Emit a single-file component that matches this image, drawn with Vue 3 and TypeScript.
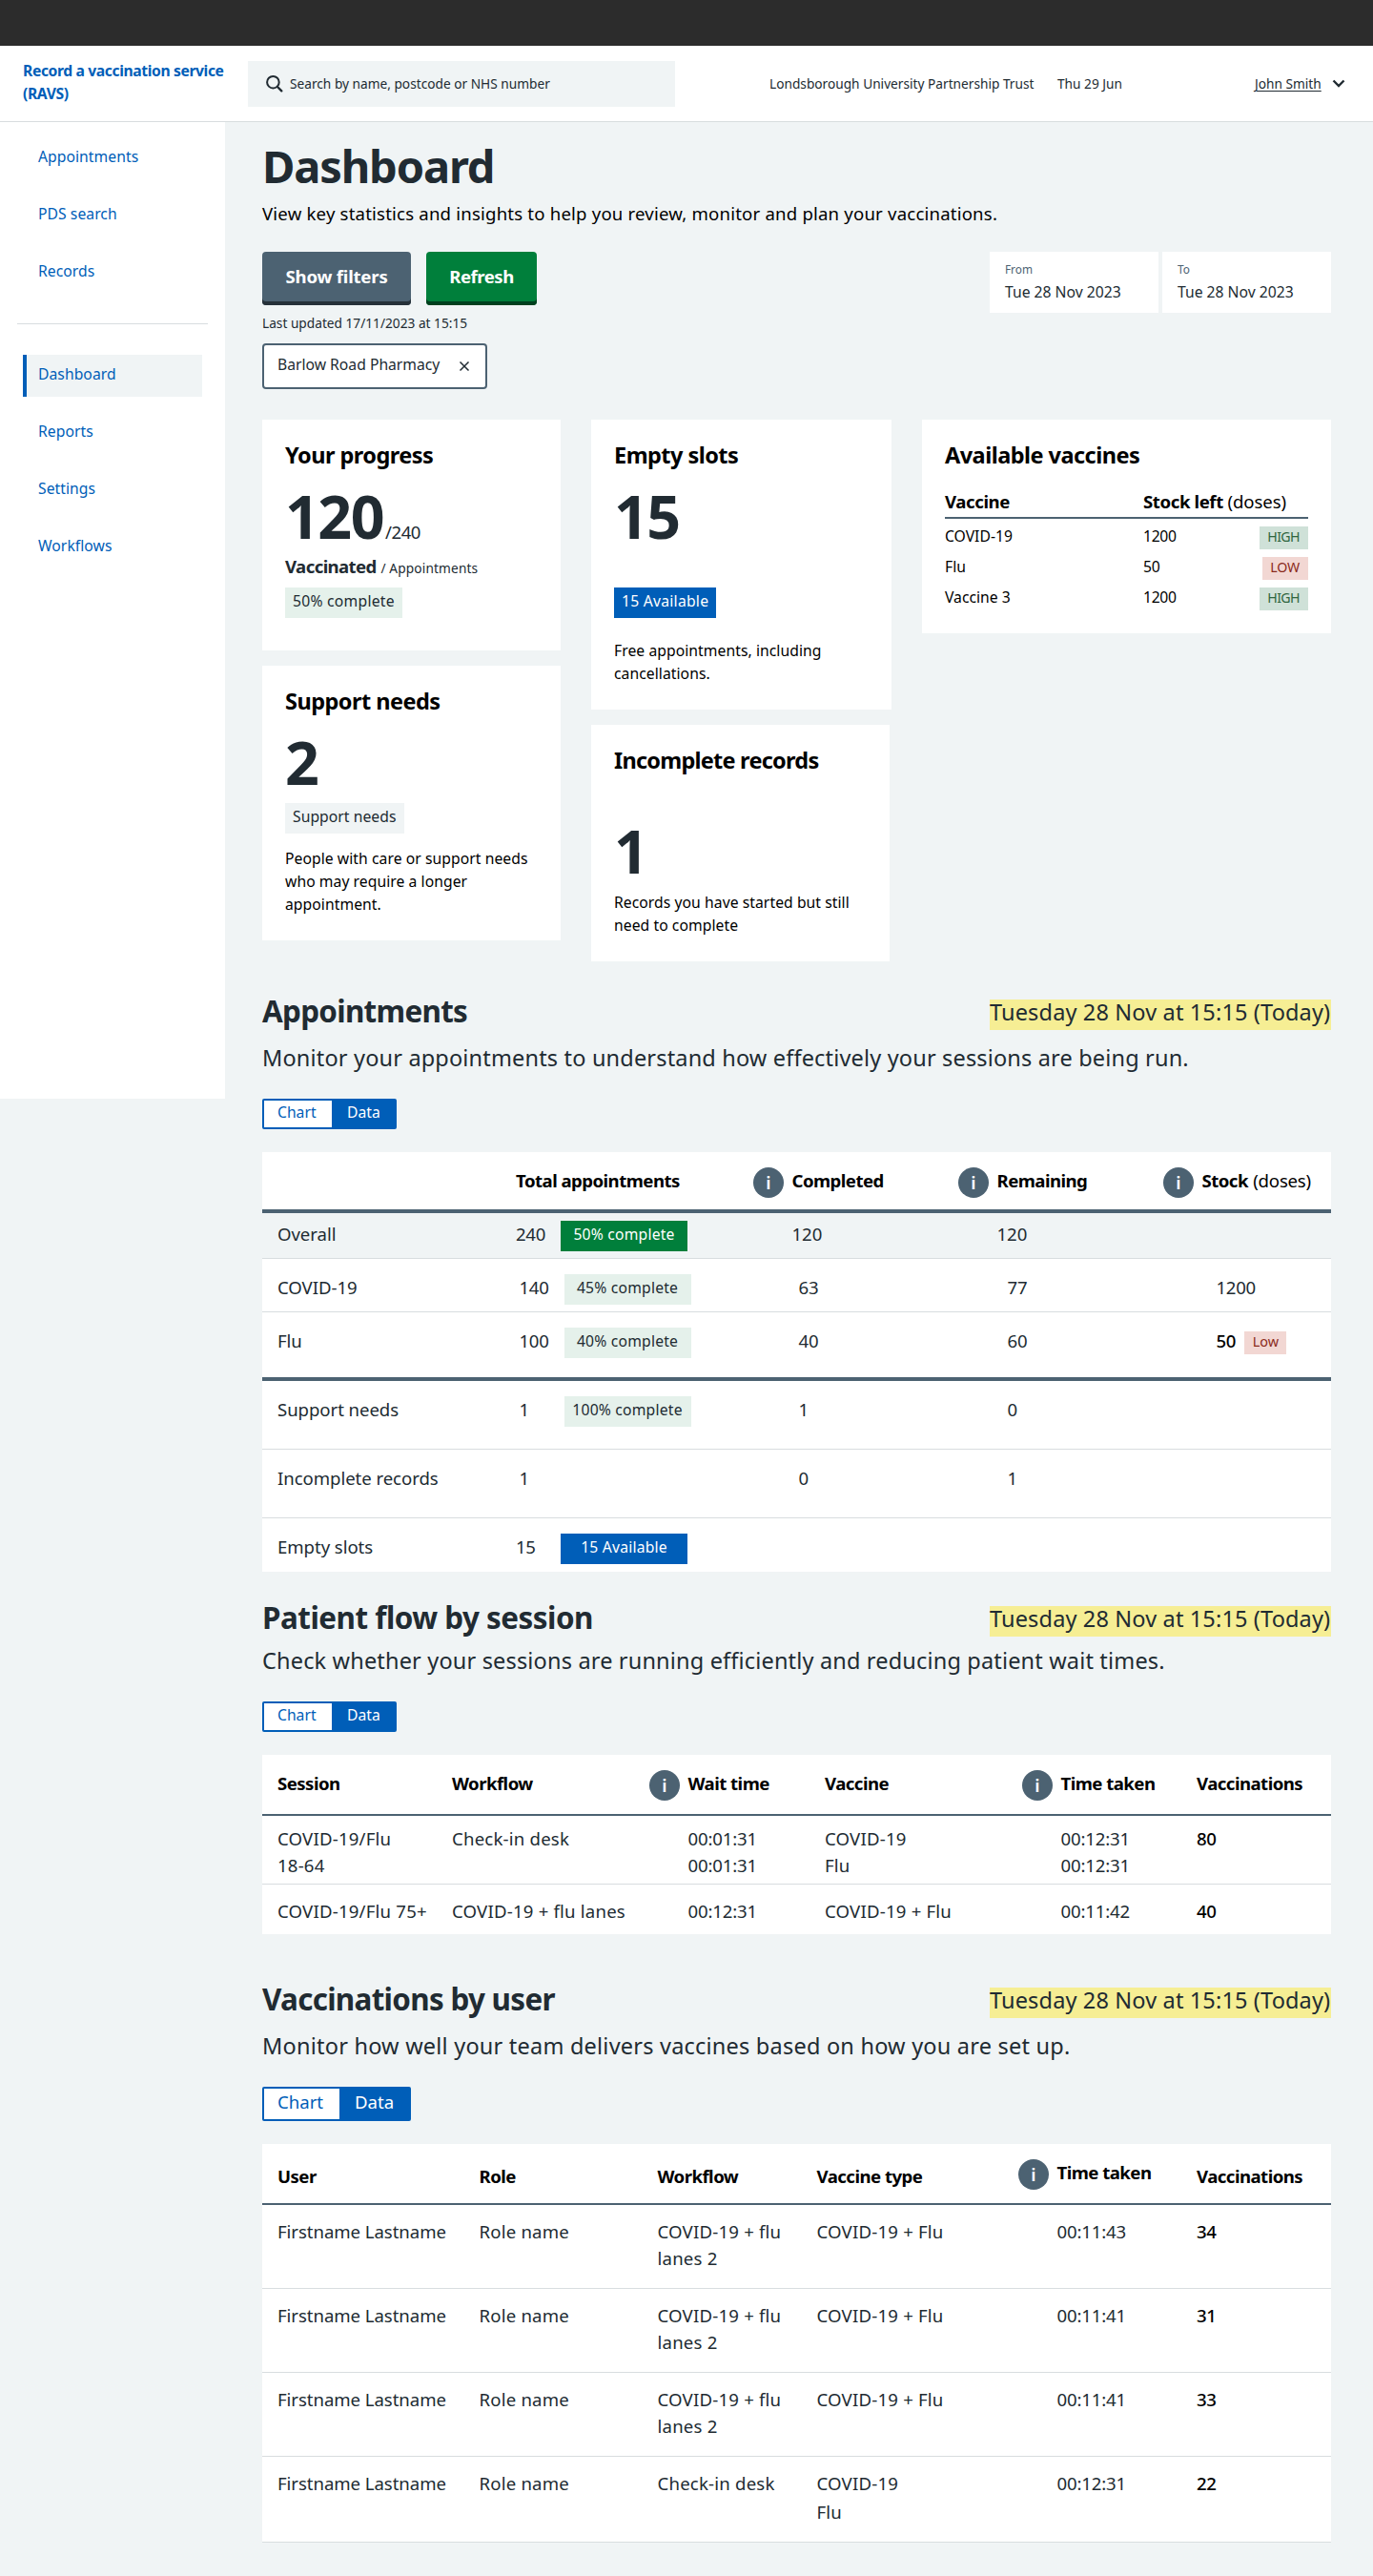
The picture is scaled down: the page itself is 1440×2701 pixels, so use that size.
<script setup lang="ts">
interface NavItem {
  label: string
  active?: boolean
}

interface Badge {
  text: string
  tone: 'green' | 'mint' | 'blue'
}

interface AppointmentRow {
  label: string
  total: string
  badge?: Badge
  completed?: string
  remaining?: string
  stock?: string
  low?: boolean
  kind: string
}

const primaryNav: NavItem[] = [{ label: 'Appointments' }, { label: 'PDS search' }, { label: 'Records' }]
const secondaryNav: NavItem[] = [
  { label: 'Dashboard', active: true },
  { label: 'Reports' },
  { label: 'Settings' },
  { label: 'Workflows' },
]

const vaccines = [
  { name: 'COVID-19', stock: '1200', level: 'HIGH' },
  { name: 'Flu', stock: '50', level: 'LOW' },
  { name: 'Vaccine 3', stock: '1200', level: 'HIGH' },
]

const today = 'Tuesday 28 Nov at 15:15 (Today)'

const appointments: AppointmentRow[] = [
  { label: 'Overall', total: '240', badge: { text: '50% complete', tone: 'green' }, completed: '120', remaining: '120', kind: 'overall' },
  { label: 'COVID-19', total: '140', badge: { text: '45% complete', tone: 'mint' }, completed: '63', remaining: '77', stock: '1200', kind: 'vaccine' },
  { label: 'Flu', total: '100', badge: { text: '40% complete', tone: 'mint' }, completed: '40', remaining: '60', stock: '50', low: true, kind: 'last-vaccine' },
  { label: 'Support needs', total: '1', badge: { text: '100% complete', tone: 'mint' }, completed: '1', remaining: '0', kind: 'other' },
  { label: 'Incomplete records', total: '1', completed: '0', remaining: '1', kind: 'other' },
  { label: 'Empty slots', total: '15', badge: { text: '15 Available', tone: 'blue' }, kind: 'empty' },
]

const sessions = [
  { session: ['COVID-19/Flu', '18-64'], workflow: 'Check-in desk', wait: ['00:01:31', '00:01:31'], vaccine: ['COVID-19', 'Flu'], time: ['00:12:31', '00:12:31'], count: 80 },
  { session: ['COVID-19/Flu 75+'], workflow: 'COVID-19 + flu lanes', wait: ['00:12:31'], vaccine: ['COVID-19 + Flu'], time: ['00:11:42'], count: 40 },
]

const users = [
  { workflow: ['COVID-19 + flu', 'lanes 2'], vaccine: ['COVID-19 + Flu'], time: '00:11:43', count: 34 },
  { workflow: ['COVID-19 + flu', 'lanes 2'], vaccine: ['COVID-19 + Flu'], time: '00:11:41', count: 31 },
  { workflow: ['COVID-19 + flu', 'lanes 2'], vaccine: ['COVID-19 + Flu'], time: '00:11:41', count: 33 },
  { workflow: ['Check-in desk'], vaccine: ['COVID-19', 'Flu'], time: '00:12:31', count: 22 },
]
</script>

<template>
  <div class="page">
    <div class="topbar"></div>

    <header class="header">
      <a class="service">Record a vaccination service<br />(RAVS)</a>
      <div class="search">
        <svg class="search-icon" width="20" height="20" viewBox="0 0 20 20" fill="none" stroke="#212b32">
          <circle cx="8.4" cy="8.2" r="6.3" stroke-width="2" />
          <path d="M13 13l4.300 4.300" stroke-width="2.4" stroke-linecap="round" />
        </svg>
        <span>Search by name, postcode or NHS number</span>
      </div>
      <span class="trust">Londsborough University Partnership Trust</span>
      <span class="date">Thu 29 Jun</span>
      <a class="user">John Smith</a>
      <svg class="chevron" width="14" height="10" viewBox="0 0 14 10" fill="none" stroke="#212b32" stroke-width="2.4">
        <path d="M1.5 1.5L7 7l5.500-5.500" />
      </svg>
    </header>

    <div class="body">
      <nav class="sidebar">
        <a v-for="item in primaryNav" :key="item.label" class="nav-item">{{ item.label }}</a>
        <hr class="divider" />
        <a v-for="item in secondaryNav" :key="item.label" class="nav-item" :class="{ active: item.active }">{{ item.label }}</a>
      </nav>

      <main class="main">
        <h1>Dashboard</h1>
        <p class="intro">View key statistics and insights to help you review, monitor and plan your vaccinations.</p>

        <div class="controls">
          <div>
            <div class="buttons">
              <button class="btn btn-grey">Show filters</button>
              <button class="btn btn-green">Refresh</button>
            </div>
            <p class="updated">Last updated 17/11/2023 at 15:15</p>
            <div class="chip">
              <span>Barlow Road Pharmacy</span>
              <svg width="12" height="12" viewBox="0 0 12 12" stroke="#212b32" stroke-width="1.5">
                <path d="M1.500 1.500l9 9M10.500 1.500l-9 9" />
              </svg>
            </div>
          </div>
          <div class="dates">
            <div class="date-box"><span class="date-label">From</span><span class="date-value">Tue 28 Nov 2023</span></div>
            <div class="date-box"><span class="date-label">To</span><span class="date-value">Tue 28 Nov 2023</span></div>
          </div>
        </div>

        <div class="cards">
          <div class="card-col col-a">
            <section class="card progress">
              <h3>Your progress</h3>
              <div class="figure">120<span class="of">/240</span></div>
              <div class="legend"><strong>Vaccinated</strong> <span>/ </span><small>Appointments</small></div>
              <div class="pill mint">50% complete</div>
            </section>
            <section class="card support">
              <h3>Support needs</h3>
              <div class="figure">2</div>
              <div class="pill grey">Support needs</div>
              <p>People with care or support needs who may require a longer appointment.</p>
            </section>
          </div>
          <div class="card-col col-b">
            <section class="card slots">
              <h3>Empty slots</h3>
              <div class="figure">15</div>
              <div class="pill blue">15 Available</div>
              <p>Free appointments, including cancellations.</p>
            </section>
            <section class="card incomplete">
              <h3>Incomplete records</h3>
              <div class="figure">1</div>
              <p>Records you have started but still need to complete</p>
            </section>
          </div>
          <section class="card stock">
            <h3>Available vaccines</h3>
            <div class="stock-head">
              <strong>Vaccine</strong>
              <span><strong>Stock left</strong> (doses)</span>
            </div>
            <div v-for="v in vaccines" :key="v.name" class="stock-row">
              <span class="stock-name">{{ v.name }}</span>
              <span class="stock-count">{{ v.stock }}</span>
              <span class="tag" :class="v.level === 'LOW' ? 'tag-red' : 'tag-green'">{{ v.level }}</span>
            </div>
          </section>
        </div>

        <div class="section-head first">
          <h2>Appointments</h2>
          <mark>{{ today }}</mark>
        </div>
        <p class="lead">Monitor your appointments to understand how effectively your sessions are being run.</p>
        <div class="toggle"><span class="off">Chart</span><span class="on">Data</span></div>
        <div class="table appts">
          <div class="row head thick">
            <div></div>
            <div>Total appointments</div>
            <div class="with-icon"><i class="info">i</i>Completed</div>
            <div class="with-icon"><i class="info">i</i>Remaining</div>
            <div class="with-icon"><i class="info">i</i><span>Stock <span class="plain">(doses)</span></span></div>
          </div>
          <div v-for="r in appointments" :key="r.label" class="row" :class="r.kind">
            <div>{{ r.label }}</div>
            <div class="total">
              <span class="total-num">{{ r.total }}</span>
              <span v-if="r.badge" class="badge" :class="r.badge.tone">{{ r.badge.text }}</span>
            </div>
            <div class="completed">{{ r.completed }}</div>
            <div class="remaining">{{ r.remaining }}</div>
            <div class="stock-cell" :class="{ emphasis: r.low }">
              {{ r.stock }}<span v-if="r.low" class="low-tag">Low</span>
            </div>
          </div>
        </div>

        <div class="section-head second">
          <h2>Patient flow by session</h2>
          <mark>{{ today }}</mark>
        </div>
        <p class="lead tight">Check whether your sessions are running efficiently and reducing patient wait times.</p>
        <div class="toggle"><span class="off">Chart</span><span class="on">Data</span></div>
        <div class="table flow">
          <div class="row head">
            <div>Session</div>
            <div>Workflow</div>
            <div class="with-icon"><i class="info">i</i>Wait time</div>
            <div>Vaccine</div>
            <div class="with-icon"><i class="info">i</i>Time taken</div>
            <div>Vaccinations</div>
          </div>
          <div v-for="(s, i) in sessions" :key="i" class="row">
            <div class="spaced"><div v-for="(l, j) in s.session" :key="j">{{ l }}</div></div>
            <div class="spaced">{{ s.workflow }}</div>
            <div class="indent"><div v-for="(l, j) in s.wait" :key="j">{{ l }}</div></div>
            <div class="spaced"><div v-for="(l, j) in s.vaccine" :key="j">{{ l }}</div></div>
            <div class="indent"><div v-for="(l, j) in s.time" :key="j">{{ l }}</div></div>
            <div class="emphasis">{{ s.count }}</div>
          </div>
        </div>

        <div class="section-head third">
          <h2>Vaccinations by user</h2>
          <mark>{{ today }}</mark>
        </div>
        <p class="lead wide">Monitor how well your team delivers vaccines based on how you are set up.</p>
        <div class="toggle large"><span class="off">Chart</span><span class="on">Data</span></div>
        <div class="table users">
          <div class="row head">
            <div>User</div>
            <div>Role</div>
            <div>Workflow</div>
            <div>Vaccine type</div>
            <div class="with-icon"><i class="info">i</i>Time taken</div>
            <div>Vaccinations</div>
          </div>
          <div v-for="(u, i) in users" :key="i" class="row">
            <div>Firstname Lastname</div>
            <div class="spaced">Role name</div>
            <div class="spaced"><div v-for="(l, j) in u.workflow" :key="j">{{ l }}</div></div>
            <div class="spaced vaccine"><div v-for="(l, j) in u.vaccine" :key="j">{{ l }}</div></div>
            <div class="indent">{{ u.time }}</div>
            <div class="emphasis">{{ u.count }}</div>
          </div>
        </div>
      </main>
    </div>
  </div>
</template>

<style>
body {
  background: #f0f4f5;
}
</style>

<style scoped>
.page,
.page * {
  box-sizing: border-box;
}

.page {
  width: 1440px;
  min-height: 2701px;
  background: #f0f4f5;
  color: #212b32;
  font-family: 'Noto Sans', 'Open Sans', sans-serif;
  font-size: 15.7px;
  line-height: 24px;
}

h1, h2, h3, p, hr {
  margin: 0;
}

.topbar {
  height: 48px;
  background: #2c2c2c;
}

.header {
  display: flex;
  height: 80px;
  background: #fff;
  border-bottom: 1px solid #d8dddf;
  font-size: 13.7px;
  line-height: 47px;
  padding-top: 16px;
  padding-left: 24px;
  white-space: nowrap;
}

.service {
  width: 236px;
  margin-top: -2px;
  font-size: 15.7px;
  font-weight: 700;
  line-height: 24px;
  letter-spacing: -0.39px;
  color: #005eb8;
}

.search {
  display: flex;
  width: 448px;
  height: 48px;
  padding-left: 18px;
  background: #f0f4f5;
}

.search-icon {
  margin: 14px 6px 0 0;
}

.trust {
  width: 302px;
  margin-left: 99px;
}

.date {
  width: 207px;
}

.user {
  width: 81px;
  text-decoration: underline;
  text-underline-offset: 2px;
}

.chevron {
  margin-top: 19px;
}

.body {
  display: flex;
  align-items: flex-start;
}

.sidebar {
  width: 236px;
  height: 1024px;
  padding-top: 16px;
  background: #fff;
}

.nav-item {
  display: block;
  width: 188px;
  height: 44px;
  margin: 0 0 16px 24px;
  padding-left: 16px;
  line-height: 41px;
  letter-spacing: 0.05px;
  color: #005eb8;
}

.nav-item.active {
  padding-left: 12px;
  border-left: 4px solid #005eb8;
  background: #f0f4f5;
}

.divider {
  width: 200px;
  height: 1px;
  margin: 31px 0 32px 18px;
  border: 0;
  background: #d8dddf;
}

.main {
  width: 1121px;
  margin-left: 39px;
  padding-top: 18px;
}

h1 {
  font-size: 47px;
  line-height: 56px;
  letter-spacing: -1.15px;
}

.intro {
  margin-top: 8px;
  font-size: 18.6px;
  line-height: 28px;
  letter-spacing: 0.19px;
  color: #000;
}

.controls {
  display: flex;
  justify-content: space-between;
  align-items: flex-start;
  margin-top: 26px;
}

.buttons {
  display: flex;
  gap: 16px;
}

.btn {
  height: 56px;
  padding: 0 0 5px;
  border: 0;
  border-radius: 4px;
  font: 700 18.6px/49px 'Noto Sans', 'Open Sans', sans-serif;
  letter-spacing: -0.2px;
  color: #fff;
}

.btn-grey {
  width: 156px;
  background: #4c6272;
  box-shadow: inset 0 -4px 0 #263139;
}

.btn-green {
  width: 116px;
  background: #007f3b;
  box-shadow: inset 0 -4px 0 #00401e;
  letter-spacing: -0.5px;
}

.updated {
  margin-top: 7px;
  font-size: 13.7px;
}

.chip {
  display: inline-flex;
  width: 236px;
  height: 48px;
  margin-top: 9px;
  padding-left: 14px;
  gap: 20px;
  border: 2px solid #4c6272;
  border-radius: 4px;
  background: #fff;
  line-height: 40px;
}

.chip svg {
  margin-top: 16px;
}

.dates {
  display: flex;
  gap: 4px;
}

.date-box {
  display: flex;
  flex-direction: column;
  gap: 4px;
  width: 177px;
  height: 64px;
  padding: 10px 16px 0;
  background: #fff;
}

.date-label {
  font-size: 11.8px;
  line-height: 16px;
  color: #4c6272;
}

.cards {
  display: flex;
  align-items: flex-start;
  gap: 32px;
  height: 568px;
  margin-top: 32px;
}

.card-col {
  display: flex;
  flex-direction: column;
  gap: 16px;
}

.col-a {
  width: 313px;
}

.col-b {
  width: 315px;
}

.card {
  padding: 21px 24px 0;
  background: #fff;
}

.card h3 {
  font-size: 23.5px;
  line-height: 32px;
  letter-spacing: -0.53px;
  color: #000;
}

.figure {
  height: 64px;
  margin-top: 15px;
  font-size: 62.7px;
  font-weight: 700;
  line-height: 65px;
  letter-spacing: -1.5px;
}

.of {
  margin-left: 2px;
  font-size: 18.6px;
  font-weight: 400;
  line-height: 1;
  letter-spacing: -0.5px;
}

.legend {
  height: 24px;
  margin-top: 10px;
  font-size: 18.6px;
  white-space: nowrap;
}

.legend strong {
  letter-spacing: -0.6px;
}

.legend span,
.legend small {
  font-size: 13.7px;
}

.legend small {
  letter-spacing: 0.15px;
}

.pill {
  width: max-content;
  height: 32px;
  padding: 0 8px;
  line-height: 28px;
  letter-spacing: 0.25px;
}

.mint {
  background: #e5f1eb;
}

.grey {
  background: #f0f4f5;
  letter-spacing: 0.05px;
}

.blue {
  background: #005eb8;
  color: #fff;
}

.green {
  background: #007f3b;
  color: #fff;
}

.card p {
  letter-spacing: 0.06px;
  color: #000;
}

.progress {
  height: 242px;
}

.progress .pill {
  margin-top: 10px;
}

.support {
  height: 288px;
}

.support .pill {
  margin-top: 12px;
}

.support p {
  margin-top: 14px;
}

.slots {
  height: 304px;
}

.slots .pill {
  margin-top: 44px;
}

.slots p {
  margin-top: 22px;
}

.incomplete {
  width: 313px;
  height: 248px;
}

.card.incomplete h3 {
  letter-spacing: -0.75px;
}

.incomplete .figure {
  margin-top: 46px;
}

.incomplete p {
  margin-top: 11px;
}

.stock {
  width: 429px;
  height: 224px;
  color: #000;
}

.stock-head {
  display: grid;
  grid-template-columns: 208px 1fr;
  height: 32px;
  margin: 19px 0 4px;
  border-bottom: 2px solid #4c6272;
  font-size: 18.6px;
  line-height: 28px;
  letter-spacing: -0.1px;
}

.stock-head strong {
  letter-spacing: -0.4px;
}

.stock-row {
  display: grid;
  grid-template-columns: 208px 1fr max-content;
  height: 32px;
  padding-top: 4px;
  line-height: 21px;
}

.stock-count {
  letter-spacing: -0.3px;
}

.tag {
  height: 24px;
  padding: 0 9px 0 8px;
  font-size: 14.2px;
  line-height: 22px;
  letter-spacing: -0.6px;
}

.tag-green {
  background: #cfe1d8;
  color: #2f6640;
}

.tag-red {
  background: #f2d7d3;
  color: #8b2a1c;
  letter-spacing: -0.2px;
}

.section-head {
  display: flex;
  justify-content: space-between;
  align-items: flex-end;
}

.section-head.first {
  margin-top: 32px;
}

.section-head.second {
  margin-top: 28px;
}

.section-head.third {
  margin-top: 48px;
}

h2 {
  font-size: 31.4px;
  line-height: 40px;
  letter-spacing: -0.7px;
}

.second h2 {
  letter-spacing: -0.5px;
}

mark {
  width: 358px;
  height: 32px;
  background: #f6ee94;
  color: inherit;
  font-size: 23.5px;
  line-height: 26px;
  letter-spacing: 0.15px;
  white-space: nowrap;
}

.lead {
  margin-top: 11px;
  font-size: 23.5px;
  line-height: 36px;
  letter-spacing: 0.17px;
}

.lead.tight {
  margin-top: 7px;
}

.lead.wide {
  letter-spacing: 0.22px;
}

.toggle {
  display: flex;
  width: 141px;
  height: 32px;
  margin: 25px 0 24px;
  border: 2px solid #005eb8;
  border-radius: 2px;
  line-height: 25px;
}

.toggle .off {
  width: 71px;
  padding-left: 14px;
  background: #fff;
  color: #005eb8;
}

.toggle .on {
  flex: 1;
  padding-left: 16px;
  background: #005eb8;
  color: #fff;
}

.toggle.large {
  width: 156px;
  height: 36px;
  font-size: 18.6px;
  line-height: 28px;
}

.toggle.large .off {
  width: 79px;
}

.table {
  background: #fff;
  font-size: 18.6px;
  line-height: 28px;
}

.row {
  display: grid;
  padding-left: 16px;
  border-bottom: 1px solid #d8dddf;
  letter-spacing: -0.06px;
}

.row.head {
  height: 64px;
  padding-top: 16px;
  border-bottom: 2px solid #4c6272;
  color: #000;
  font-weight: 700;
  letter-spacing: -0.53px;
}

.row.thick {
  border-bottom-width: 4px;
}

.with-icon {
  display: flex;
  gap: 8.500px;
}

.info {
  width: 32px;
  height: 32px;
  border-radius: 50%;
  background: #4c6272;
  color: #fff;
  font-style: normal;
  font-weight: 600;
  line-height: 32px;
  letter-spacing: 0;
  text-align: center;
}

.plain {
  margin-left: 1px;
  font-weight: 400;
  letter-spacing: -0.2px;
}

.spaced {
  letter-spacing: 0.2px;
}

.indent {
  padding-left: 40.500px;
  letter-spacing: -0.15px;
}

.emphasis {
  color: #000;
  font-weight: 500;
  letter-spacing: -0.4px;
}

.appts .row {
  grid-template-columns: 250px 249px 215px 215px 1fr;
}

.appts .overall {
  height: 48px;
  padding-top: 8px;
  background: #f0f4f5;
}

.appts .vaccine {
  height: 56px;
  padding-top: 16px;
}

.appts .last-vaccine {
  height: 72px;
  padding-top: 16px;
  border-bottom: 4px solid #4c6272;
}

.appts .other {
  height: 72px;
  padding-top: 16px;
}

.appts .empty {
  height: 56px;
  padding-top: 16px;
  border-bottom: 0;
}

.total {
  display: flex;
  padding-left: 3.500px;
}

.total-num {
  width: 47px;
  letter-spacing: -0.3px;
}

.completed {
  padding-left: 47.500px;
}

.remaining {
  padding-left: 51.500px;
}

.stock-cell {
  display: flex;
  padding-left: 55.500px;
  letter-spacing: -0.3px;
}

.overall .total,
.empty .total {
  padding-left: 0;
}

.overall .completed,
.overall .remaining {
  padding-left: 40.500px;
}

.badge {
  width: 133px;
  height: 32px;
  font-size: 15.7px;
  letter-spacing: 0.2px;
  text-align: center;
}

.low-tag {
  height: 24px;
  margin: 4px 0 0 9px;
  padding: 0 8.500px;
  background: #f2d7d3;
  color: #8b2a1c;
  font-size: 14.4px;
  font-weight: 400;
  line-height: 21px;
  letter-spacing: 0;
}

.flow .row {
  grid-template-columns: 183px 207px 184px 207px 183px 1fr;
}

.flow .row:nth-child(2) {
  height: 72px;
  padding-top: 10px;
}

.flow .row:nth-child(3) {
  height: 52px;
  padding-top: 14px;
  border-bottom: 0;
}

.users .row {
  grid-template-columns: 211.500px 187px 167px 211.500px 187px 1fr;
  height: 88px;
  padding-top: 14px;
}

.users .row.head {
  height: 64px;
  padding-top: 20px;
}

.users .head .with-icon {
  margin-top: -4px;
}

.users .row:last-child {
  height: 90px;
}

.users .row:last-child .vaccine > div + div {
  margin-top: 2px;
}
</style>
